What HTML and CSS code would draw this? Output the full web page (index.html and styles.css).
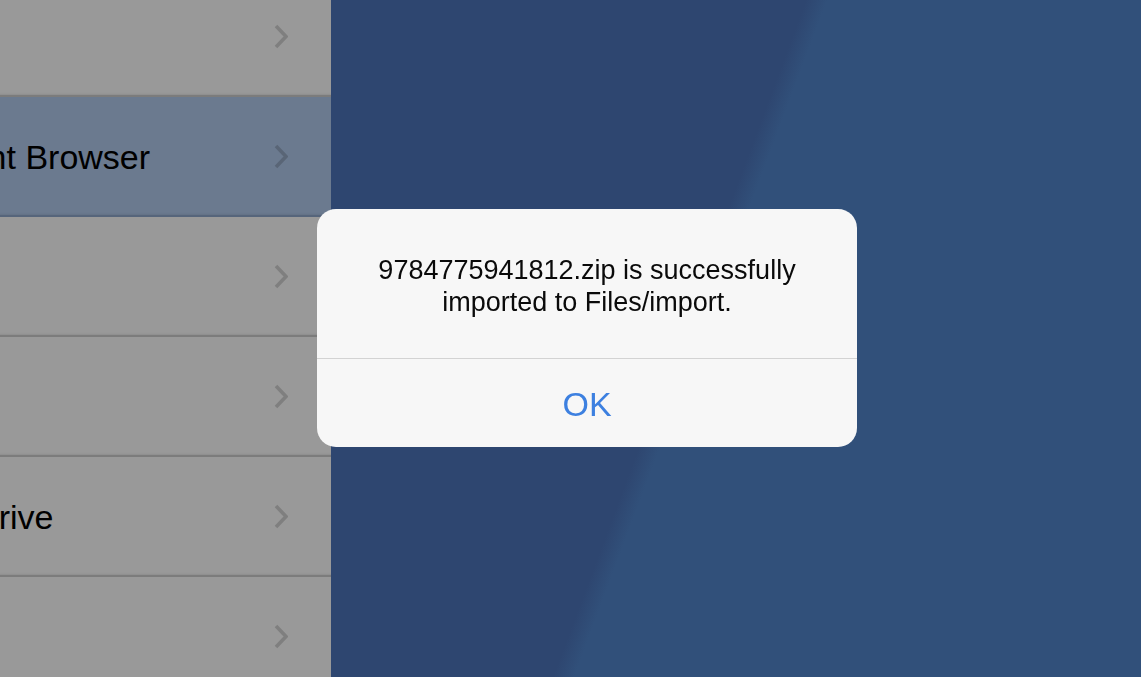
FILE: index.html
```html
<!DOCTYPE html>
<html>
<head>
    <title>Import</title>
    <link rel="stylesheet" href="styles.css">
</head>
<body>
    <div class="screen">
        <div class="sidebar">
            <div class="row first">
                <span class="label"></span>
                <svg class="chevron" viewBox="0 0 14 25"><path d="M2 2 L12 12.5 L2 23"/></svg>
            </div>
            <div class="row active">
                <span class="label browser">Document Browser</span>
                <svg class="chevron" viewBox="0 0 14 25"><path d="M2 2 L12 12.5 L2 23"/></svg>
            </div>
            <div class="row">
                <span class="label"></span>
                <svg class="chevron" viewBox="0 0 14 25"><path d="M2 2 L12 12.5 L2 23"/></svg>
            </div>
            <div class="row">
                <span class="label"></span>
                <svg class="chevron" viewBox="0 0 14 25"><path d="M2 2 L12 12.5 L2 23"/></svg>
            </div>
            <div class="row">
                <span class="label drive">Google Drive</span>
                <svg class="chevron" viewBox="0 0 14 25"><path d="M2 2 L12 12.5 L2 23"/></svg>
            </div>
            <div class="row">
                <span class="label"></span>
                <svg class="chevron" viewBox="0 0 14 25"><path d="M2 2 L12 12.5 L2 23"/></svg>
            </div>
        </div>
        <div class="main"></div>
    </div>

    <div class="overlay">
        <div class="alert">
            <div class="message">9784775941812.zip is successfully<br>imported to Files/import.</div>
            <div class="button">OK</div>
        </div>
    </div>
</body>
</html>
```

FILE: styles.css
```css
* {
	box-sizing: border-box;
}

body {
	margin: 0;
	padding: 0;
	font-family: "Liberation Sans", Arial, sans-serif;
	overflow: hidden;
}

.screen {
	display: flex;
	height: 677px;
}

.sidebar {
	width: 331px;
	flex-shrink: 0;
	overflow: hidden;
	background-color: #999999;
}

.row {
	height: 120px;
	display: flex;
	align-items: center;
	justify-content: space-between;
	padding-right: 43px;
	padding-top: 2px;
	background-color: #999999;
	border-bottom: 2px solid #7c7c7c;
	box-shadow: inset 0 -3px 2px -2px rgba(0, 0, 0, 0.08);
}

.row.first {
	margin-top: -23px;
}

.row.active {
	background-color: #6b7a8f;
	border-bottom-color: #56657b;
}

.label {
	font-size: 34px;
	color: #000;
	white-space: nowrap;
}

.label.browser {
	margin-left: -139px;
}

.label.drive {
	margin-left: -145px;
}

.chevron {
	width: 14px;
	height: 25px;
	flex-shrink: 0;
	margin-top: -2px;
}

.chevron path {
	fill: none;
	stroke: rgba(0, 0, 0, 0.17);
	stroke-width: 3.6;
}

.main {
	flex: 1;
	background: linear-gradient(110.5deg, #2e4670 445px, #31507a 465px);
}

.overlay {
	position: fixed;
	top: 0;
	left: 0;
	right: 0;
	bottom: 0;
	display: flex;
	justify-content: center;
	align-items: center;
	padding-left: 33px;
	padding-bottom: 21px;
}

.alert {
	width: 540px;
	height: 238px;
	background-color: #f7f7f7;
	border-radius: 19px;
	display: flex;
	flex-direction: column;
	overflow: hidden;
}

.message {
	height: 150px;
	padding-top: 45px;
	font-size: 27px;
	line-height: 32px;
	text-align: center;
	color: #0a0a0a;
	border-bottom: 1px solid #d3d3d3;
}

.button {
	flex: 1;
	display: flex;
	justify-content: center;
	align-items: center;
	padding-top: 2px;
	font-size: 34px;
	color: #3d80e0;
}
```
